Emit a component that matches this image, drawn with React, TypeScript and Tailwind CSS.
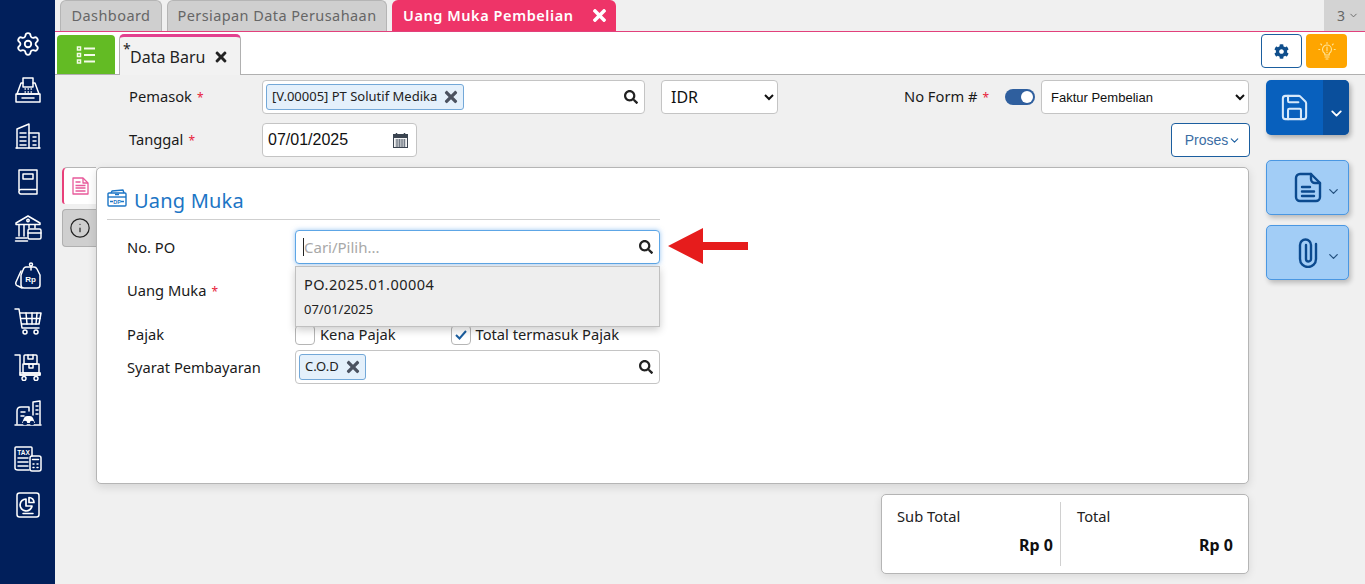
import React from "react";
import { ChevronDown, Info, Save, Settings } from "lucide-react";
import { FaCog, FaSearch, FaTimes } from "react-icons/fa";

const Ico = ({ children }: { children: React.ReactNode }) => (
  <div className="h-[46.1px] flex items-center justify-center">
    <svg width="28" height="28" viewBox="0 0 28 28" fill="none" stroke="#fff" strokeWidth="1.5" strokeLinejoin="round" strokeLinecap="round">
      {children}
    </svg>
  </div>
);

const Sidebar = () => (
  <div className="w-[55px] shrink-0 pt-[21px] bg-[#011f5b]">
    <div className="h-[46.1px] flex items-center justify-center">
      <Settings size={26} color="#fff" strokeWidth={1.7} />
    </div>
    <Ico>
      <rect x="9" y="2" width="10" height="9" />
      <path d="M9 7H7L3 18h22L21 7h-2" />
      <rect x="2" y="18" width="24" height="8" />
      <path d="M8 22h12" />
      <path d="M11 13h.5M14 13h.5M17 13h.5M11 16h.5M14 16h.5M17 16h.5" strokeWidth="1.3" />
    </Ico>
    <Ico>
      <path d="M3 26V7l12-5v24" />
      <path d="M15 11h10v15" />
      <path d="M2 26h24" />
      <path d="M6 11h6M6 15h6M6 19h6M6 23h6M19 15h3M19 19h3M19 23h3" />
    </Ico>
    <Ico>
      <path d="M5 22V2h18v24H7a2 2 0 0 1-2-2.500a2 2 0 0 1 2-2h16" />
      <rect x="9" y="6" width="10" height="5" />
    </Ico>
    <Ico>
      <path d="M2 9l12-7 12 7v1.500H2z" />
      <circle cx="14" cy="6.500" r="1.200" />
      <path d="M5 11v11M10 11v11M15 11v3M21 11v3M2 24h11M1.500 27h12" />
      <rect x="14" y="15" width="13" height="10" rx="1.500" />
      <path d="M14 19h13" />
    </Ico>
    <Ico>
      <path d="M7 10L2 21q-1 3 2 4l4 2" />
      <path d="M12 6q-2 0-3 3l-2 5v10q0 3 3 3h13q3 0 3-3V14l-3-6q-1-2-3-2z" />
      <circle cx="17" cy="3.500" r="1.500" />
      <path d="M17 5v4" />
      <text x="16.500" y="21" fontSize="8" fontWeight="700" fill="#fff" stroke="none" textAnchor="middle" fontFamily="'Liberation Sans', sans-serif">Rp</text>
    </Ico>
    <Ico>
      <path d="M1 2h4l3 19h17" />
      <path d="M6 6h21l-2 11H8" />
      <path d="M12 6l1 11M18 6v11M23 6l-1 11M7 11.500h19" />
      <circle cx="11" cy="25" r="2" />
      <circle cx="22" cy="25" r="2" />
    </Ico>
    <Ico>
      <path d="M1 2h5v20h20v-2" />
      <path d="M6 22h20v-2H6" />
      <rect x="10" y="2" width="13" height="9" rx="1" />
      <rect x="9" y="11" width="16" height="9" />
      <path d="M14 2v4h5V2M15 11v4h4v-4" />
      <circle cx="10" cy="25.500" r="2" />
      <circle cx="22" cy="25.500" r="2" />
    </Ico>
    <Ico>
      <path d="M3 25V12q0-4 4-4h8v4M19 16V3l7-1v23" />
      <path d="M1 26h26" />
      <path d="M7 13h4M7 17h3M22 7h2M22 11h2M22 15h2" />
      <path d="M8 24l2-5q1-2 3-2h3q2 0 3 2l2 5z" fill="#fff" stroke="none" />
      <circle cx="11" cy="24" r="1.500" fill="#011f5b" stroke="#011f5b" />
      <circle cx="18" cy="24" r="1.500" fill="#011f5b" stroke="#011f5b" />
    </Ico>
    <Ico>
      <path d="M15 25H4q-3 0-3-2V3q0-1 1-1h15q1 0 1 1v8" />
      <text x="9.500" y="9.500" fontSize="6.500" fontWeight="700" fill="#fff" stroke="none" textAnchor="middle" fontFamily="'Liberation Sans', sans-serif">TAX</text>
      <path d="M4 13h10M4 17h10M4 21h10" />
      <rect x="16" y="11" width="11" height="15" rx="2" />
      <path d="M18.500 14.500h6M19 19h1M23 19h1M19 22.500h1M23 22.500h1" />
    </Ico>
    <Ico>
      <rect x="3" y="2" width="22" height="24" rx="2.500" />
      <path d="M12 8a6 6 0 1 0 6 7h-6z" strokeWidth="1.700" />
      <path d="M15 6.500a5 5 0 0 1 5 5h-5z" strokeWidth="1.700" />
      <path d="M9 22.500h10" />
    </Ico>
  </div>
);

const Star = () => <span className="text-[#e8213a] text-[12px] ml-[5px]">*</span>;

const Chip = ({ text, w }: { text: string; w: string }) => (
  <span className={`${w} h-[26px] ml-[3px] flex items-center justify-between pl-[5px] pr-[3px] bg-[#e4f0fb] border border-[#73a8d8] rounded-[3px] text-[13px] text-[#222]`}>
    {text}
    <FaTimes size={18} color="#4b5260" />
  </span>
);

const Cal = () => (
  <svg width="15" height="15" viewBox="0 0 15 15">
    <rect x="0.500" y="1.500" width="14" height="13" fill="#f4f4f4" stroke="#3b4450" />
    <rect x="0.500" y="1.500" width="14" height="3.500" fill="#3b4450" />
    <path d="M3.500 0v3M11.500 0v3" stroke="#3b4450" strokeWidth="1.500" />
    <path d="M2.500 7h10M2.500 9h10M2.500 11h10M2.500 13h10M4 6v8M6.500 6v8M9 6v8M11.500 6v8" stroke="#6b7480" strokeWidth="0.900" />
  </svg>
);

const ListIcon = () => (
  <svg width="20" height="20" viewBox="0 0 20 20" fill="none" stroke="#f4fbe9" strokeWidth="2">
    <rect x="1.500" y="2" width="3" height="3" strokeWidth="1.500" />
    <rect x="1.500" y="8.500" width="3" height="3" strokeWidth="1.500" />
    <rect x="1.500" y="15" width="3" height="3" strokeWidth="1.500" />
    <path d="M8 3.500h11M8 10h11M8 16.500h11" />
  </svg>
);

const BulbIcon = () => (
  <svg width="18" height="18" viewBox="0 0 18 18" fill="none" stroke="#ffe69a" strokeWidth="1.100" strokeLinecap="round">
    <path d="M6.800 13v-1.500Q4.500 10 4.500 7.500a4.500 4.500 0 0 1 9 0q0 2.500-2.300 4V13z" />
    <path d="M7 15h4M8 17h2M9 5v3.500M9 10v.5" />
    <path d="M9 .5v1M2.800 2l.8.8M15.200 2l-.8.8M.8 7.500h1M16.200 7.500h1" />
  </svg>
);

const DocIcon = () => (
  <svg width="28" height="31" viewBox="0 0 28 31" fill="none" stroke="#0b4a8f" strokeWidth="2.400" strokeLinejoin="round" strokeLinecap="round">
    <path d="M17 2H6a4 4 0 0 0-4 4v19a4 4 0 0 0 4 4h16a4 4 0 0 0 4-4V11z" />
    <path d="M17 2v5a4 4 0 0 0 4 4h5" />
    <path d="M8 15h8M8 19.500h12M8 24h12" />
  </svg>
);

const ClipIcon = () => (
  <svg width="20" height="31" viewBox="0 0 20 31" fill="none" stroke="#0b4a8f" strokeWidth="2.400" strokeLinecap="round">
    <path d="M18 7v15a8 8 0 0 1-16 0V8a5.500 5.500 0 0 1 11 0v14a2.500 2.500 0 0 1-5 0V8" />
  </svg>
);

const DpIcon = () => (
  <svg width="20" height="18" viewBox="0 0 20 18" fill="none" stroke="#1c75c5" strokeWidth="1.400" strokeLinejoin="round">
    <rect x="1" y="4" width="18" height="13" rx="1" />
    <path d="M1 8h18" />
    <path d="M4 4l1-2 11-1 1 3" />
    <path d="M8 5.500h4M3 12.500h3M14 12.500h3" />
    <text x="10" y="14.500" fontSize="5.500" fontWeight="700" fill="#1c75c5" stroke="none" textAnchor="middle" fontFamily="'Liberation Sans', sans-serif">DP</text>
  </svg>
);

const PinkDoc = () => (
  <svg width="17" height="18" viewBox="0 0 17 18" fill="none" stroke="#e85a9b" strokeWidth="1.300" strokeLinejoin="round">
    <path d="M1 1h10l5 5v11H1z" />
    <path d="M11 1v5h5" />
    <path d="M3.500 5h5M3.500 8.500h10M3.500 11h10M3.500 14h10" strokeWidth="1.500" />
  </svg>
);

const PageTab = ({ w, children }: { w: string; children: string }) => (
  <div className={`${w} h-full flex items-center justify-center bg-[#cfcfcf] border border-b-0 border-[#b5b5b5] rounded-t-[6px] text-[#666] text-[14.5px] tracking-[0.42px]`}>
    {children}
  </div>
);

const Label = ({ w, children }: { w: string; children: React.ReactNode }) => (
  <div className={`${w} shrink-0 text-[14.7px] leading-[20px] text-[#1a1a1a]`}>{children}</div>
);

const SideButton = ({ pl, children }: { pl: string; children: React.ReactNode }) => (
  <div className={`${pl} w-[83px] h-[55px] flex items-center bg-[#a2cdf6] border border-[#4a97e2] rounded-[5px] shadow-[2px_3px_5px_rgba(0,0,0,0.22)]`}>
    <div className="w-[30px] flex justify-center">{children}</div>
    <ChevronDown size={15} color="#24517f" className="ml-[3px] mt-[8px]" />
  </div>
);

const TotalCell = ({ w, label, pl, pr }: { w: string; label: string; pl: string; pr: string }) => (
  <div className={`${w} ${pl} ${pr} h-full flex flex-col`}>
    <div className="text-[14.7px] leading-[22px] text-[#222] mt-[3px]">{label}</div>
    <div className="text-right font-bold text-[16px] leading-[22px] text-[#111] mt-[7px]">Rp 0</div>
  </div>
);

export default function App() {
  return (
    <div className="relative flex w-[1365px] h-[584px] overflow-hidden bg-[#f0f0f0] text-black font-['Noto_Sans',sans-serif]">
      <Sidebar />
      <div className="flex-1 min-w-0 flex flex-col">
        {/* page tabs */}
        <div className="h-[32px] shrink-0 flex items-stretch gap-[5px] pl-[5px] border-b border-[#e2407c] bg-[#f0f0f0]">
          <PageTab w="w-[102px]">Dashboard</PageTab>
          <PageTab w="w-[220px]">Persiapan Data Perusahaan</PageTab>
          <div className="w-[224px] flex items-center pl-[11px] bg-[#ee3468] rounded-t-[6px] text-white font-semibold text-[14.5px] tracking-[0.57px]">
            Uang Muka Pembelian
            <FaTimes size={19} color="#fff" className="ml-[16px]" />
          </div>
          <div className="ml-auto w-[41px] flex items-center pl-[13px] gap-[3px] bg-[#d3d3d3] text-[#666] text-[14px]">
            3 <ChevronDown size={11} color="#666" />
          </div>
        </div>

        {/* sub toolbar */}
        <div className="h-[43px] shrink-0 flex items-end bg-white border-b border-[#b0b0b0] pl-[2px] pr-[18px]">
          <div className="w-[58px] h-[39px] flex items-center justify-center bg-[#63bb24] rounded-t-[4px]">
            <ListIcon />
          </div>
          <div className="relative w-[122px] h-[41px] -mb-px ml-[4px] flex items-center pt-[2px] pl-[10px] bg-[#f2f2f2] border-x border-[#b0b0b0] border-t-[3px] border-t-[#e2408f] rounded-t-[5px] text-[16px] text-[#222]">
            <span className="absolute left-[3px] top-[1px] text-[14px]">*</span>
            Data Baru
            <FaTimes size={16} color="#222" className="ml-[8px]" />
          </div>
          <div className="ml-auto self-center flex gap-[4px] mt-[-4px]">
            <div className="w-[41px] h-[34px] flex items-center justify-center bg-white border border-[#1b5e9f] rounded-[4px]">
              <FaCog size={15} color="#0f4e8c" />
            </div>
            <div className="w-[41px] h-[34px] flex items-center justify-center bg-[#fea500] rounded-[4px]">
              <BulbIcon />
            </div>
          </div>
        </div>

        <div className="flex flex-1 min-h-0">
          <div className="w-[1194px] shrink-0 flex flex-col">
            {/* head form */}
            <div className="h-[34px] mt-[5px] flex items-center pl-[74px]">
              <Label w="w-[133px]">Pemasok<Star /></Label>
              <div className="w-[383px] h-[34px] flex items-center bg-white border border-[#c4c4c4] rounded-[4px]">
                <Chip text="[V.00005] PT Solutif Medika" w="w-[198px]" />
                <FaSearch size={14} color="#222" className="ml-auto mr-[6px]" />
              </div>
              <select defaultValue="IDR" className="ml-[16px] w-[117px] h-[34px] pl-[5px] bg-white border border-[#c4c4c4] rounded-[4px] text-[16px] text-[#111] font-['Noto_Sans',sans-serif]">
                <option>IDR</option>
              </select>
              <div className="ml-[126px] w-[101px]"><Label w="w-[101px]">No Form #<Star /></Label></div>
              <div className="relative w-[30px] h-[16px] rounded-full bg-[#2f5f9e]">
                <div className="absolute right-[2px] top-[2px] w-[12px] h-[12px] rounded-full bg-white" />
              </div>
              <select defaultValue="Faktur Pembelian" className="ml-[6px] w-[208px] h-[34px] pl-[5px] bg-white border border-[#c4c4c4] rounded-[4px] text-[13px] text-[#111] font-['Liberation_Sans',sans-serif]">
                <option>Faktur Pembelian</option>
              </select>
            </div>
            <div className="h-[34px] mt-[9px] flex items-center pl-[74px]">
              <Label w="w-[133px]">Tanggal<Star /></Label>
              <div className="w-[155px] h-[34px] flex items-center justify-between pl-[5px] pr-[8px] bg-white border border-[#c4c4c4] rounded-[4px] text-[16px] text-[#111] font-['Liberation_Sans',sans-serif]">
                07/01/2025
                <Cal />
              </div>
              <div className="ml-auto -mr-px w-[79px] h-[34px] flex items-center justify-center pl-[5px] bg-white border border-[#1b5e9f] rounded-[4px] text-[14px] text-[#3b6da3] font-['Liberation_Sans',sans-serif]">
                Proses<ChevronDown size={13} color="#1b5e9f" />
              </div>
            </div>

            {/* panel */}
            <div className="flex mt-[10px] pl-[7px]">
              <div className="w-[34px] shrink-0">
                <div className="h-[37px] flex items-center pl-[8px] bg-white border-l-[2px] border-l-[#e8407a] border-t border-t-[#b5b5b5] rounded-tl-[5px] rounded-bl-[3px]">
                  <PinkDoc />
                </div>
                <div className="h-[38px] mt-[5px] flex items-center pl-[6px] bg-[#cfcfcf] border border-r-0 border-[#b0b0b0] rounded-l-[4px]">
                  <Info size={22} color="#222" strokeWidth={1.3} />
                </div>
              </div>
              <div className="relative w-[1153px] h-[317px] bg-white border border-[#b5b5b5] rounded-[5px] shadow-[0_3px_10px_rgba(0,0,0,0.12)]">
                <div className="w-[553px] ml-[10px] h-[52px] pt-[17px] border-b border-[#cfcfcf] flex items-start">
                  <div className="mt-[4px]"><DpIcon /></div>
                  <span className="ml-[7px] text-[20px] leading-[32px] text-[#1c75c5] tracking-[0.2px]">Uang Muka</span>
                </div>
                <div className="mt-[10px] ml-[30px] flex items-center h-[34px]">
                  <Label w="w-[168px]">No. PO</Label>
                  <div className="w-[365px] h-[34px] flex items-center pl-[7px] bg-white border border-[#5da6e6] rounded-[4px] shadow-[0_0_5px_rgba(70,150,230,0.55)]">
                    <span className="w-px h-[18px] bg-[#222]" />
                    <span className="text-[15px] text-[#a8a8a8]">Cari/Pilih...</span>
                    <FaSearch size={14} color="#222" className="ml-auto mr-[6px]" />
                  </div>
                </div>
                <div className="mt-[10px] ml-[30px] h-[34px] flex items-center">
                  <Label w="w-[168px]">Uang Muka<Star /></Label>
                </div>
                <div className="mt-[13px] ml-[30px] h-[26px] flex items-center">
                  <Label w="w-[168px]">Pajak</Label>
                  <span className="w-[20px] h-[20px] bg-white border border-[#b5b5b5] rounded-[4px] mt-[2px]" />
                  <span className="ml-[5px] text-[14.7px] leading-[20px] text-[#222]">Kena Pajak</span>
                  <span className="ml-[55px] w-[20px] h-[20px] mt-[2px] flex items-center justify-center bg-white border border-[#b5b5b5] rounded-[4px]">
                    <svg width="12" height="10" viewBox="0 0 12 10" fill="none" stroke="#1b5e9f" strokeWidth="2"><path d="M1 5l3.500 3.500L11 1" /></svg>
                  </span>
                  <span className="ml-[5px] text-[14.7px] leading-[20px] text-[#222]">Total termasuk Pajak</span>
                </div>
                <div className="mt-[3px] ml-[30px] h-[34px] flex items-center">
                  <Label w="w-[168px]">Syarat Pembayaran</Label>
                  <div className="w-[365px] h-[34px] flex items-center bg-white border border-[#c4c4c4] rounded-[4px]">
                    <Chip text="C.O.D" w="w-[67px]" />
                    <FaSearch size={14} color="#222" className="ml-auto mr-[6px]" />
                  </div>
                </div>

                {/* open dropdown */}
                <div className="absolute left-[198px] top-[98px] w-[365px] h-[61px] px-[8px] bg-[#eeeeee] border border-[#c0c0c0] shadow-[0_3px_8px_rgba(0,0,0,0.2)]">
                  <div className="text-[14.5px] leading-[20px] mt-[7px] text-[#222] tracking-[0.5px]">PO.2025.01.00004</div>
                  <div className="text-[13px] leading-[17px] mt-[7px] text-[#222]">07/01/2025</div>
                </div>
              </div>
            </div>

            {/* totals */}
            <div className="ml-auto mt-[10px] w-[368px] h-[80px] flex items-stretch py-[7px] bg-white border border-[#b5b5b5] rounded-[5px] shadow-[0_2px_8px_rgba(0,0,0,0.1)]">
              <TotalCell w="w-[178px]" pl="pl-[15px]" pr="pr-[7px]" label="Sub Total" />
              <TotalCell w="w-[188px] border-l border-[#d0d0d0]" pl="pl-[16px]" pr="pr-[15px]" label="Total" />
            </div>
          </div>

          {/* right actions */}
          <div className="ml-[17px] w-[83px] shrink-0 pt-[5px] flex flex-col">
            <div className="w-[83px] h-[55px] flex rounded-[5px] overflow-hidden bg-[#0860bd] shadow-[2px_3px_5px_rgba(0,0,0,0.28)]">
              <div className="w-[57px] flex items-center justify-center">
                <Save size={31} color="#d6e8fa" strokeWidth={1.6} />
              </div>
              <div className="flex-1 flex items-center justify-center bg-[#0a4f9c]">
                <ChevronDown size={17} color="#fff" strokeWidth={2.6} className="mt-[11px]" />
              </div>
            </div>
            <div className="mt-[25px]"><SideButton pl="pl-[26px]"><DocIcon /></SideButton></div>
            <div className="mt-[10px]"><SideButton pl="pl-[26px]"><ClipIcon /></SideButton></div>
          </div>
        </div>
      </div>

      {/* annotation arrow */}
      <svg className="absolute left-[668px] top-[228px]" width="81" height="36" viewBox="0 0 81 36">
        <path d="M0 18L35 0v14h45v8H35v14z" fill="#e61c1c" />
      </svg>
    </div>
  );
}
